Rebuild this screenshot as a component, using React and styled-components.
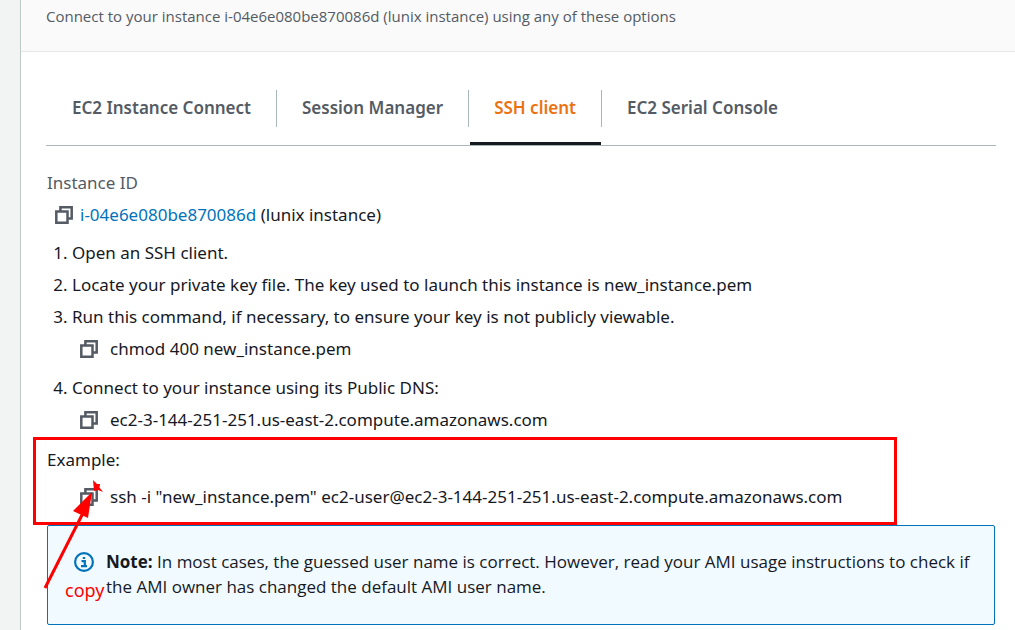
import React from "react";
import styled, { createGlobalStyle } from "styled-components";

const Global = createGlobalStyle`
  * { box-sizing: border-box; }
  body {
    margin: 0;
    background: #f2f3f3;
    color: #16191f;
    font-family: "Noto Sans", "Open Sans", sans-serif;
    font-size: 17px;
    line-height: 24px;
  }
`;

const Page = styled.main`
  margin-left: 20px;
  min-height: 100vh;
  border-left: 1px solid #c0c8c8;
  background: #ffffff;
`;

const Header = styled.header`
  padding: 4px 25px 23px;
  border-bottom: 1px solid #e4e7e7;
  background: #fafafa;
  color: #545b64;
  font-family: "Open Sans", "Noto Sans", sans-serif;
  font-size: 15px;
`;

const Content = styled.div`
  padding: 38px 19px 5px 25px;
`;

const TabList = styled.div`
  display: flex;
  border-bottom: 1px solid #aab7b8;
`;

const Tab = styled.button`
  position: relative;
  padding: 0 25px 2px;
  margin: 0 0 18px;
  height: 37px;
  border: 0;
  border-right: 1px solid #aab7b8;
  background: none;
  color: ${(p) => (p.$active ? "#ec7211" : "#545b64")};
  font: inherit;
  font-weight: 600;
  &:first-child { padding-left: 26px; }
  &:last-child { border-right: 0; }
  &::after {
    content: "";
    display: ${(p) => (p.$active ? "block" : "none")};
    position: absolute;
    left: 1px;
    right: 0;
    bottom: -18px;
    height: 3px;
    background: #16191f;
  }
`;

const Panel = styled.section`
  padding: 25px 1px 0;
`;

const Label = styled.div`
  color: #545b64;
`;

const InstanceRow = styled.div`
  display: flex;
  align-items: center;
  gap: 7px;
  margin-top: 8px;
  padding-left: 8px;
`;

const Link = styled.a`
  color: #0073bb;
  text-decoration: none;
`;

const CopyButton = styled.button`
  display: flex;
  padding: 0;
  border: 0;
  background: none;
  color: #545b64;
`;

const Steps = styled.ol`
  margin: 14px 0 0;
  padding-left: 25px;
`;

const Step = styled.li`
  margin-bottom: ${(p) => (p.$spaced ? 15 : 8)}px;
  &:last-child { margin-bottom: 0; }
`;

const Command = styled.div`
  display: flex;
  align-items: center;
  gap: 12px;
  margin-top: 8px;
  padding-left: 8px;
`;

const Example = styled.div`
  position: relative;
  margin-top: 16px;
  padding-bottom: 16px;
`;

const ExampleCommand = styled(Command)`
  margin-top: 13px;
  padding-left: 33px;
`;

const Highlight = styled.div`
  position: absolute;
  top: -11px;
  bottom: 0;
  left: -14px;
  width: 864px;
  border: 3px solid #ff0000;
  pointer-events: none;
`;

const Arrow = styled.svg`
  position: absolute;
  top: 30px;
  left: -6px;
  z-index: 1;
  pointer-events: none;
`;

const Caption = styled.span`
  position: absolute;
  top: 132px;
  left: 18px;
  z-index: 1;
  color: #ff0000;
  font-size: 18px;
  line-height: 20px;
`;

const Alert = styled.div`
  display: flex;
  gap: 12px;
  padding: 23px 12px 24px 26px;
  min-height: 100px;
  border: 1px solid #0073bb;
  border-radius: 2px;
  background: #f1faff;
  font-family: "Open Sans", "Noto Sans", sans-serif;
  line-height: 25px;
`;

const InfoIcon = styled.svg`
  flex: none;
  margin-top: 3px;
`;

const AlertText = styled.p`
  margin: 0;
`;

const Strong = styled.strong`
  font-weight: 700;
`;

function Copy() {
  return (
    <CopyButton type="button" aria-label="Copy">
      <svg width="18" height="18" viewBox="0 0 18 18" fill="none" stroke="currentColor" strokeWidth="2.5">
        <path d="M1.3 5.5h11.2v11.2H1.3z" />
        <path d="M5.4 5.5V1.3h11.3v11.2h-4.2" />
      </svg>
    </CopyButton>
  );
}

const tabs = ["EC2 Instance Connect", "Session Manager", "SSH client", "EC2 Serial Console"];

export default function App() {
  return (
    <>
      <Global />
      <Page>
        <Header>Connect to your instance i-04e6e080be870086d (lunix instance) using any of these options</Header>
        <Content>
          <TabList role="tablist">
            {tabs.map((tab) => (
              <Tab key={tab} type="button" role="tab" aria-selected={tab === "SSH client"} $active={tab === "SSH client"}>
                {tab}
              </Tab>
            ))}
          </TabList>
          <Panel role="tabpanel">
            <Label>Instance ID</Label>
            <InstanceRow>
              <Copy />
              <span><Link href="#instance">i-04e6e080be870086d</Link> (lunix instance)</span>
            </InstanceRow>
            <Steps>
              <Step>Open an SSH client.</Step>
              <Step>Locate your private key file. The key used to launch this instance is new_instance.pem</Step>
              <Step $spaced>
                Run this command, if necessary, to ensure your key is not publicly viewable.
                <Command><Copy />chmod 400 new_instance.pem</Command>
              </Step>
              <Step>
                Connect to your instance using its Public DNS:
                <Command><Copy />ec2-3-144-251-251.us-east-2.compute.amazonaws.com</Command>
              </Step>
            </Steps>
            <Example>
              <div>Example:</div>
              <ExampleCommand>
                <Copy />
                ssh -i "new_instance.pem" ec2-user@ec2-3-144-251-251.us-east-2.compute.amazonaws.com
              </ExampleCommand>
              <Highlight />
              <Arrow width="64" height="112" viewBox="0 0 64 112" aria-hidden="true">
                <path d="M4 110 L42 35" stroke="#ff0000" strokeWidth="3" />
                <path d="M51 14 L32 33 L47 40 Z" fill="#ff0000" />
                <path d="M52 2 L56 6 L59 6 L58.5 9.5 L62 14 L57 12 L53 13 Z" fill="#ff0000" />
              </Arrow>
              <Caption>copy</Caption>
            </Example>
            <Alert>
              <InfoIcon width="20" height="20" viewBox="0 0 20 20" fill="none" aria-hidden="true">
                <circle cx="10" cy="10" r="8.9" stroke="#0073bb" strokeWidth="2.2" />
                <path d="M7.5 9.2h3.3v5M7 14.2h6M8.8 6h2.4" stroke="#0073bb" strokeWidth="2.2" />
              </InfoIcon>
              <AlertText>
                <Strong>Note:</Strong> In most cases, the guessed user name is correct. However, read your AMI usage
                instructions to check if the AMI owner has changed the default AMI user name.
              </AlertText>
            </Alert>
          </Panel>
        </Content>
      </Page>
    </>
  );
}
